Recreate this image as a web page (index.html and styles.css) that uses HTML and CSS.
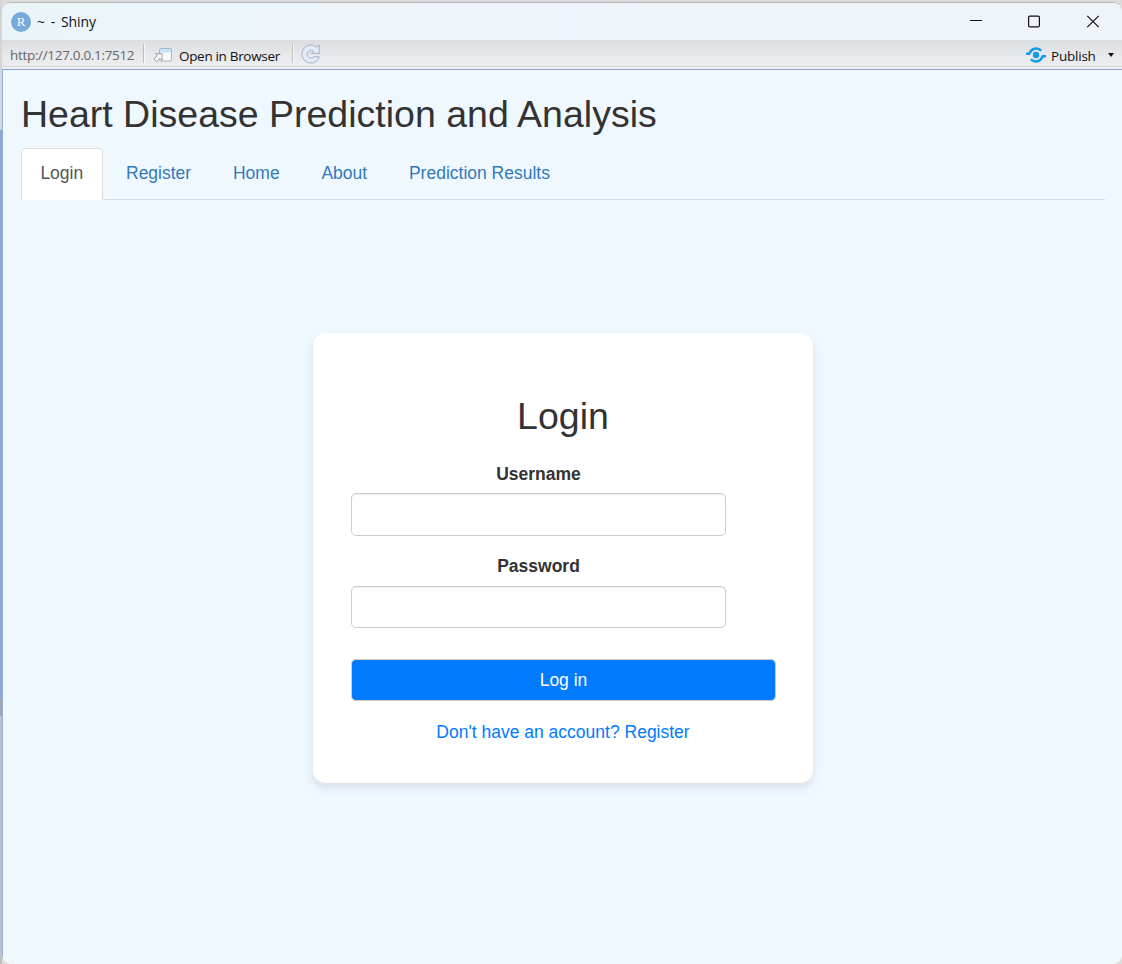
FILE: index.html
```
<!DOCTYPE html>
<html lang="en">
<head>
<meta charset="utf-8">
<title>~ - Shiny</title>
<link rel="stylesheet" href="styles.css">
</head>
<body>
<div class="window">
  <header class="titlebar">
    <svg class="app-icon" width="20" height="20" viewBox="0 0 20 20"><circle cx="10" cy="10" r="10" fill="#75aadb"/><text x="10" y="14.4" text-anchor="middle" class="app-letter">R</text></svg>
    <span class="window-title">~ - Shiny</span>
    <svg class="window-controls" width="130" height="14" viewBox="0 0 130 14" fill="none" stroke="#111" stroke-width="1.2"><path d="M0 5.5h12" stroke-width="1"/><rect x="58.6" y="1.1" width="10.8" height="10.8" rx="1.2"/><path d="M117.3 .8l11.4 11.4M128.7 .8L117.3 12.2"/></svg>
  </header>
  <div class="toolbar">
    <span class="address">http://127.0.0.1:7512</span>
    <i class="divider"></i>
    <svg class="open-icon" width="20" height="16" viewBox="0 0 20 16"><rect x="6.5" y="1.5" width="12" height="12.5" rx="1.5" fill="#f7f9fa" stroke="#a5b6c1"/><path d="M7 2h11v3.5H7z" fill="#c9e4f8"/><path d="M.8 12.2l3.4-3.4-1.6-2.1h6.5v6.6l-2.2-1.8-3.4 3.2z" fill="#f4f6f7" stroke="#899ba7" stroke-width=".9"/></svg>
    <span class="open-label">Open in Browser</span>
    <i class="divider second"></i>
    <svg class="refresh-icon" width="20" height="20" viewBox="0 0 20 20"><path d="M14.8 3.1L18.3 1.2v8.2h-8l2.4-2.4C9.8 5.2 6.2 6.8 6.2 10.2c0 3.6 4.4 5.2 6.6 2.6h5.4C16.8 16.9 13.7 19 10 19 5 19 1 15 1 10S5 1 10 1c1.8 0 3.4.7 4.8 2.1z" fill="#e3ebf8" stroke="#a5b0c3" stroke-linejoin="round"/></svg>
    <div class="publish">
      <svg width="20" height="16" viewBox="0 0 20 16"><circle cx="10" cy="8" r="3.2" fill="#129be4"/><path d="M0 6.7h3.2C5.5 1.2 11 .1 15.2 3.6M20 9.3h-3.2C14.5 14.8 9 15.9 4.8 12.4" fill="none" stroke="#129be4" stroke-width="2.5"/></svg>
      <span class="publish-label">Publish</span>
      <i class="caret"></i>
    </div>
  </div>
  <main class="page">
    <h1>Heart Disease Prediction and Analysis</h1>
    <nav class="tabs">
      <a class="tab active">Login</a><a class="tab">Register</a><a class="tab">Home</a><a class="tab">About</a><a class="tab">Prediction Results</a>
    </nav>
    <form class="card">
      <h2>Login</h2>
      <div class="field"><label for="user">Username</label><input id="user" type="text"></div>
      <div class="field"><label for="pass">Password</label><input id="pass" type="password"></div>
      <button type="button">Log in</button>
      <a class="signup">Don't have an account? Register</a>
    </form>
  </main>
</div>
</body>
</html>
```
FILE: styles.css
```
* { box-sizing: border-box; }
body {
  margin: 0;
  height: 964px;
  padding: 2px 0 0 2px;
  overflow: hidden;
  background: linear-gradient(#d5d5d5 0 130px, #8da6d4 130px 699px, #a5a5a5 699px 716px, #c0c0c0 716px) 0 0 / 2px 100% no-repeat, #dcdcdc;
  font-family: "Liberation Sans", Arial, sans-serif;
  font-size: 17.5px;
  color: #333;
}
.window {
  height: 962px;
  display: flex;
  flex-direction: column;
  border-top: 1px solid #b4b6b8;
  border-radius: 9px;
  overflow: hidden;
  background: #f0f8ff;
}
.titlebar {
  flex: none;
  height: 37px;
  display: flex;
  align-items: center;
  padding: 0 22px 0 9px;
  background: linear-gradient(90deg, #eaf5fa, #eff4fb 60%);
  font-family: "Open Sans", "Noto Sans", sans-serif;
  color: #111;
}
.app-letter { font: 13px "Liberation Serif", serif; fill: #fff; }
.window-title { margin-left: 6px; font-size: 14px; letter-spacing: -.1px; word-spacing: 2.3px; }
.window-controls { margin-left: auto; }
.toolbar {
  flex: none;
  height: 30px;
  display: flex;
  align-items: center;
  padding: 1px 8px 0 8px;
  background: linear-gradient(transparent 26px, #d2d5da 26px 27px, #f0f1f4 27px), linear-gradient(#dcdde1, #e9eaed 60%, #ecedef);
  border-bottom: 1px solid #839fd3;
  font-family: "Open Sans", "Noto Sans", sans-serif;
  font-size: 13.5px;
  color: #111;
}
.address { width: 125px; white-space: nowrap; color: #666; letter-spacing: -.32px; }
.divider { width: 2px; height: 19px; margin: 0 0 4px 8px; border-left: 1px solid #bcbec2; border-right: 1px solid #f7f7f8; }
.open-icon { margin-left: 8px; }
.open-label { width: 101px; margin-left: 6px; padding-top: 2px; white-space: nowrap; letter-spacing: -.32px; }
.second { margin-left: 12px; }
.refresh-icon { margin: 0 0 3px 7px; }
.publish { margin-left: auto; display: flex; align-items: center; }
.publish-label { width: 45px; margin: 2px 12px 0 5px; letter-spacing: -.22px; }
.caret { border: 3px solid transparent; border-top: 4px solid #111; border-bottom: 0; }
.page {
  flex: 1;
  display: flex;
  flex-direction: column;
  padding: 23px 17px 0 18px;
  border-left: 1px solid #8fb0e4;
}
h1, h2 { margin: 0; font-size: 37.5px; font-weight: 400; line-height: 42px; }
.tabs {
  display: flex;
  gap: 3px;
  height: 52px;
  margin: 13px 0 0;
  border-bottom: 1px solid #d6dde3;
}
.tab {
  height: 52px;
  padding: 14px 18.4px 0;
  border: 1px solid transparent;
  line-height: 20px;
  color: #337ab7;
}
.tab.active {
  margin-right: 1px;
  background: #fff;
  color: #555;
  border-color: #ddd;
  border-bottom-color: #fff;
  border-radius: 5px 5px 0 0;
}
.card {
  width: 500px;
  height: 450px;
  margin: 133px 0 0 292px;
  padding: 62px 38px 0 38px;
  border-radius: 12.5px;
  background: #fff;
  box-shadow: 0 5px 10px rgba(0, 0, 0, .1);
  text-align: center;
}
.field { width: 375px; margin-top: 26px; }
h2 + .field { margin-top: 27px; }
label { display: block; height: 20px; line-height: 20px; font-weight: 700; }
input {
  display: block;
  width: 375px;
  height: 43px;
  margin-top: 9px;
  border: 1px solid #ccc;
  border-radius: 5px;
  background: #fff;
  box-shadow: inset 0 1px 1px rgba(0, 0, 0, .075);
}
h2 + .field + .field { margin-top: 20px; }
h2 + .field + .field input { height: 42px; margin-top: 10px; }
button {
  display: block;
  width: 425px;
  height: 42px;
  margin-top: 31px;
  border: 1px solid #ccc;
  border-radius: 5px;
  background: #007bff;
  color: #fff;
  font: inherit;
}
.signup { display: block; margin-top: 21px; line-height: 20px; color: #007bff; }
```
